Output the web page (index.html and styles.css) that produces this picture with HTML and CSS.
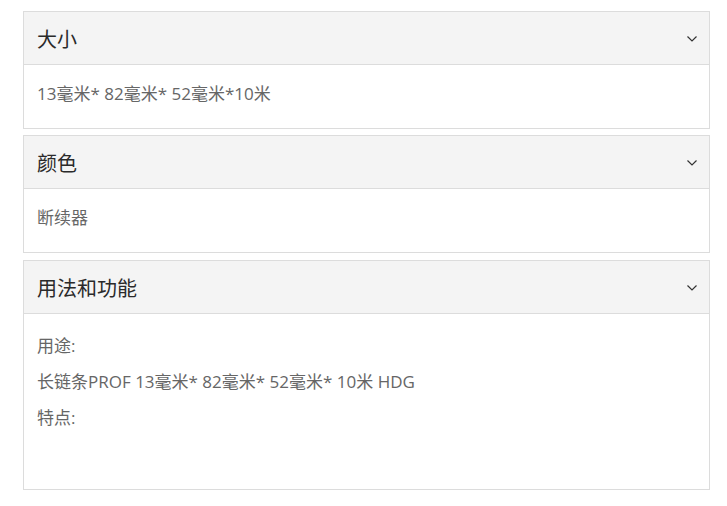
FILE: index.html
```html
<!DOCTYPE html>
<html lang="zh">
<head>
<meta charset="utf-8">
<link rel="stylesheet" href="styles.css">
</head>
<body>
<div class="accordion">
  <section class="panel">
    <div class="panel-head"><span class="title">大小</span><svg class="chev" viewBox="0 0 10 6" width="10" height="6"><path d="M0.5 0.5 L5 5 L9.5 0.5" fill="none" stroke="#333" stroke-width="1.2"/></svg></div>
    <div class="panel-body"><p>13毫米* 82毫米* 52毫米*10米</p></div>
  </section>
  <section class="panel">
    <div class="panel-head"><span class="title">颜色</span><svg class="chev" viewBox="0 0 10 6" width="10" height="6"><path d="M0.5 0.5 L5 5 L9.5 0.5" fill="none" stroke="#333" stroke-width="1.2"/></svg></div>
    <div class="panel-body"><p>断续器</p></div>
  </section>
  <section class="panel panel-usage">
    <div class="panel-head"><span class="title">用法和功能</span><svg class="chev" viewBox="0 0 10 6" width="10" height="6"><path d="M0.5 0.5 L5 5 L9.5 0.5" fill="none" stroke="#333" stroke-width="1.2"/></svg></div>
    <div class="panel-body tall">
      <p>用途:</p>
      <p>长链条PROF 13毫米* 82毫米* 52毫米* 10米 HDG</p>
      <p>特点:</p>
    </div>
  </section>
</div>
</body>
</html>
```
FILE: styles.css
```css
html, body { margin: 0; padding: 0; background: #fff; }
body {
  font-family: "Open Sans", "Noto Sans CJK SC", sans-serif;
  padding: 11px 17px 0 23px;
}
.accordion { display: flex; flex-direction: column; gap: 6px; width: 687px; }
.panel { border: 1px solid #dcdcdc; }
.panel-usage { margin-top: 1px; }
.panel-head {
  background: #f4f4f4;
  border-bottom: 1px solid #dcdcdc;
  height: 53px;
  padding: 0 12px 0 13px;
  display: flex; align-items: center; justify-content: space-between;
  box-sizing: border-box;
}
.title { font-size: 20px; color: #2a2a2a; line-height: 26px; padding-top: 4px; }
.chev { margin-top: 1px; }
.panel-body { padding: 15px 13px 20px 13px; }
.panel-body p { margin: 0; font-size: 17px; color: #666; line-height: 28px; }
.panel-body.tall { padding-top: 20px; padding-bottom: 0; height: 175px; box-sizing: border-box; }
.panel-body.tall p { line-height: 24px; margin-bottom: 12px; }
```
